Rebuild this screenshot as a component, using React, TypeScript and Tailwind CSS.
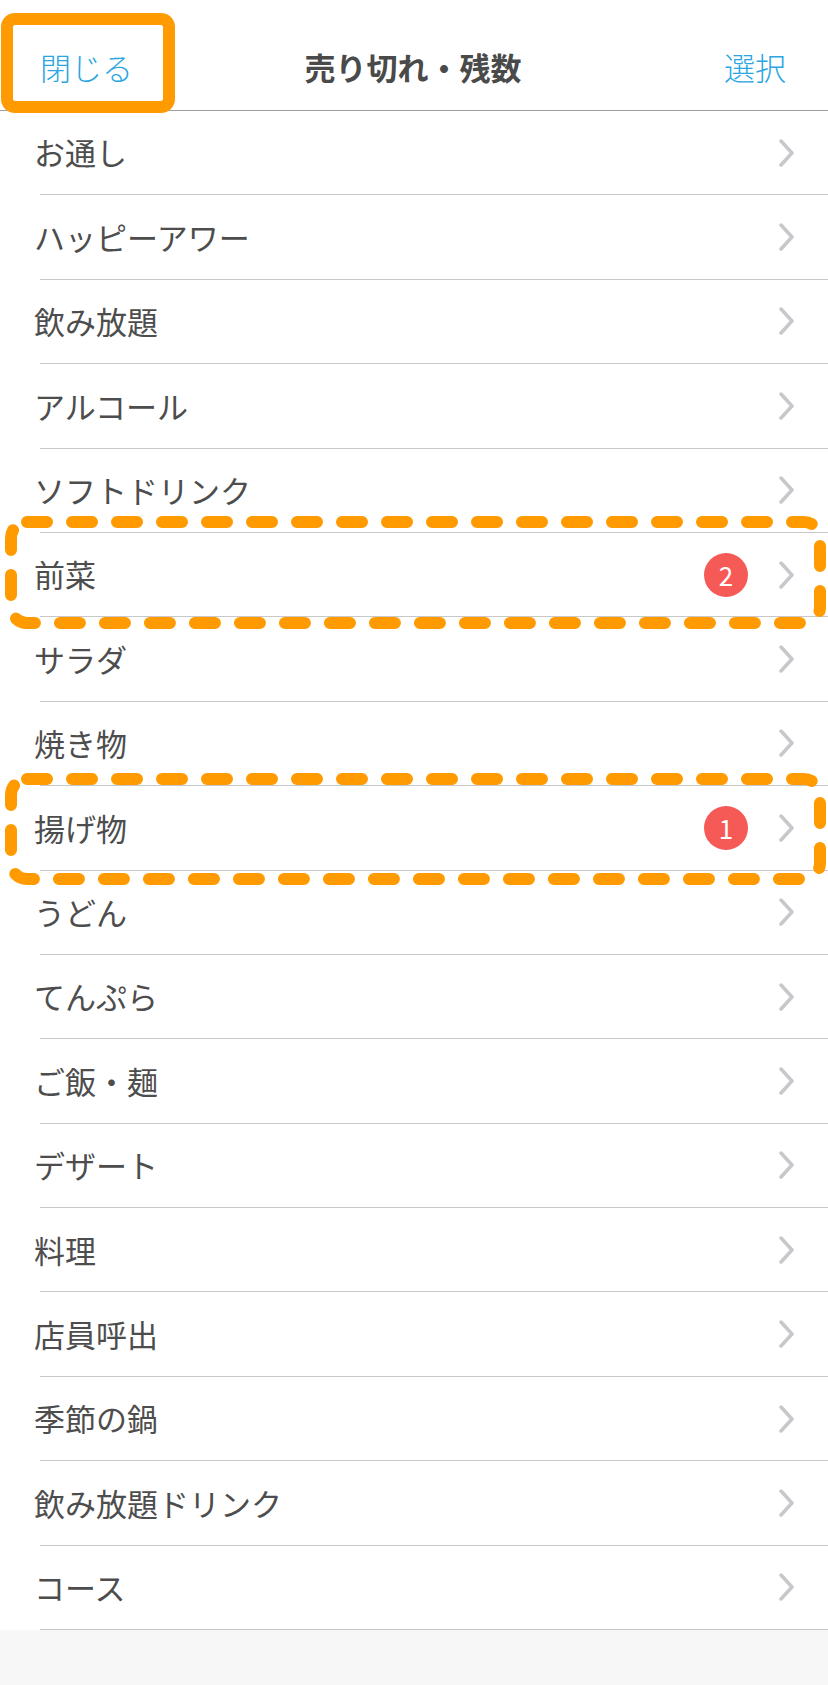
const categories: { name: string; badge?: number }[] = [
  { name: 'お通し' },
  { name: 'ハッピーアワー' },
  { name: '飲み放題' },
  { name: 'アルコール' },
  { name: 'ソフトドリンク' },
  { name: '前菜', badge: 2 },
  { name: 'サラダ' },
  { name: '焼き物' },
  { name: '揚げ物', badge: 1 },
  { name: 'うどん' },
  { name: 'てんぷら' },
  { name: 'ご飯・麺' },
  { name: 'デザート' },
  { name: '料理' },
  { name: '店員呼出' },
  { name: '季節の鍋' },
  { name: '飲み放題ドリンク' },
  { name: 'コース' },
];

function Chevron() {
  return (
    <svg width="17" height="28" viewBox="0 0 17 28" className="shrink-0">
      <polyline
        points="3,2 14,14 3,26"
        fill="none"
        stroke="#c7c7cc"
        strokeWidth="3.5"
        strokeLinecap="round"
        strokeLinejoin="round"
      />
    </svg>
  );
}

export default function App() {
  return (
    <div
      className="relative min-h-screen w-[828px] bg-[#f7f7f7]"
      style={{ fontFamily: '"Noto Sans CJK JP", "Noto Sans", sans-serif' }}
    >
      {/* Header */}
      <div className="flex h-[111px] items-center border-b border-[#a0a0a0] bg-white pl-[40px] pr-[42px] pt-[24px]">
        <button className="w-[120px] text-left text-[31px] font-light text-[#2ba6e1]">閉じる</button>
        <h1 className="flex-1 text-center text-[31px] font-bold text-[#4a4a4a]">売り切れ・残数</h1>
        <button className="w-[120px] text-right text-[31px] font-light text-[#2ba6e1]">選択</button>
      </div>

      {/* Category list */}
      <ul className="bg-white">
        {categories.map((c) => (
          <li key={c.name}>
            <div className="flex h-[83.4px] items-center pl-[34px] pr-[33px]">
              <span className="flex-1 text-[31px] text-[#4d4d4d]">{c.name}</span>
              {c.badge && (
                <span className="mr-[30px] flex h-[44px] w-[44px] items-center justify-center rounded-full bg-[#f65a56] text-[26px] leading-none text-white">
                  {c.badge}
                </span>
              )}
              <Chevron />
            </div>
            <div className="ml-[40px] h-px bg-[#c8c8c8]" />
          </li>
        ))}
      </ul>

      {/* Annotations */}
      <div className="pointer-events-none absolute left-[1px] top-[13px] h-[100px] w-[174px] rounded-[14px] border-[12px] border-[#ff9b00]" />
      <svg className="pointer-events-none absolute left-0 top-0" width="828" height="1685">
        <rect x="11" y="522" width="809" height="101" rx="16" fill="none" stroke="#ff9b00" strokeWidth="12" strokeDasharray="20 25" strokeLinecap="round" />
        <rect x="11" y="779" width="809" height="100" rx="16" fill="none" stroke="#ff9b00" strokeWidth="12" strokeDasharray="20 25" strokeLinecap="round" />
      </svg>
    </div>
  );
}
